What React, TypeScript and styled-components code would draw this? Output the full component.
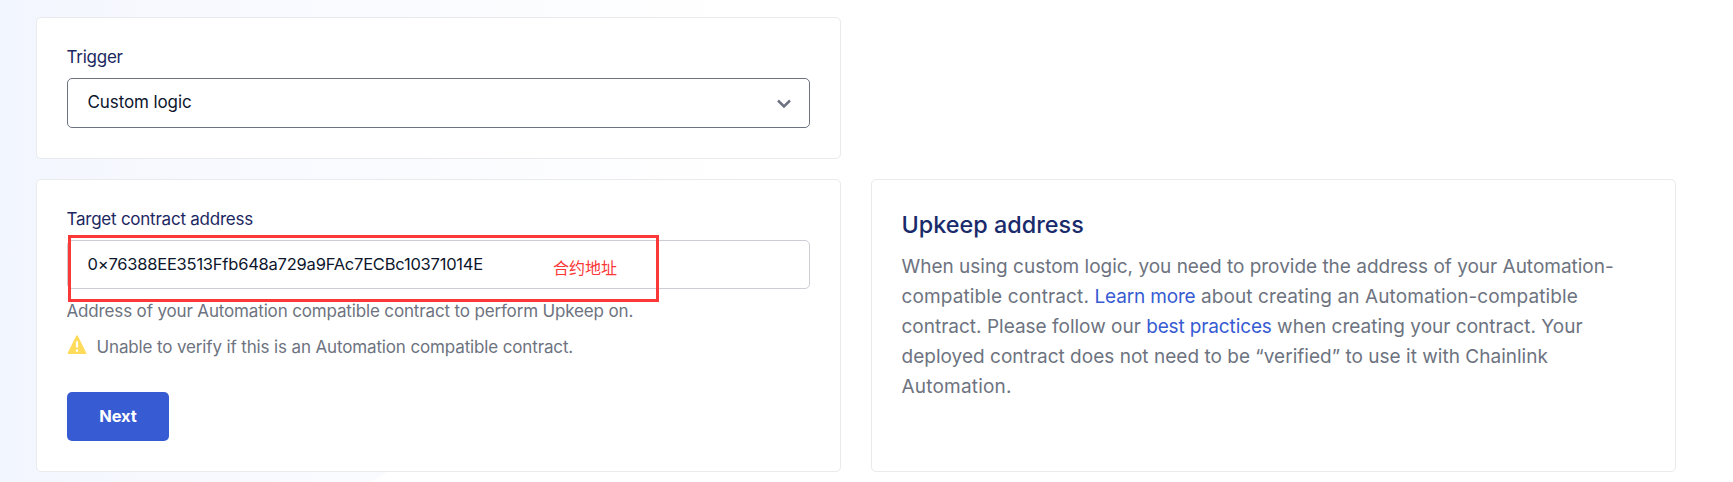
import React from "react";
import styled, { createGlobalStyle } from "styled-components";

const GlobalStyle = createGlobalStyle`
  * { box-sizing: border-box; }
  html, body { margin: 0; background: #ffffff; overflow: hidden; }
  body { font-family: Inter, "Noto Sans CJK SC", sans-serif; color: #6d7380; }
`;

const Page = styled.main`
  position: relative;
  width: 1733px;
  height: 482px;
  padding: 17px 57px 10px 36px;
  overflow: hidden;
`;

const Backdrop = styled.div`
  position: absolute;
  inset: 0;
  background: linear-gradient(90deg, #f2f6ff 0, #f8f9fe 180px, #fafbff 400px, #ffffff 740px);
  clip-path: polygon(0 0, 100% 0, 100% 472px, 387px 472px, 371px 482px, 0 482px);
`;

const Grid = styled.div`
  position: relative;
  display: grid;
  grid-template-columns: 805px 805px;
  grid-template-rows: 142px 293px;
  column-gap: 30px;
  row-gap: 20px;
`;

const Card = styled.section<{ $column: number }>`
  grid-column: ${(p) => p.$column};
  display: flex;
  flex-direction: column;
  align-items: flex-start;
  padding: 27px 30px 0;
  background: #ffffff;
  border: 1px solid #e9eaec;
  border-radius: 5px;
`;

const InfoCard = styled(Card)`
  padding: 30px 29.5px 0;
`;

const Text = styled.span<{ $spacing?: number }>`
  white-space: pre;
  letter-spacing: ${(p) => p.$spacing ?? 0}px;
`;

const Label = styled.label`
  font-size: 17px;
  line-height: 24px;
  color: #1c2762;
  margin: 0 0 9px -0.5px;
`;

const Select = styled.div`
  display: flex;
  align-items: center;
  justify-content: space-between;
  width: 743px;
  height: 50px;
  padding: 0 18px 2px 19.5px;
  border: 1px solid #6d7380;
  border-radius: 5px;
  font-size: 17px;
  line-height: 24px;
  color: #0c162c;
`;

const Chevron = styled.svg`
  width: 14px;
  height: 10px;
  margin-top: 4px;
`;

const Field = styled.div`
  position: relative;
  display: flex;
  align-items: center;
  width: 743px;
  height: 49px;
  padding: 0 20px 1px 19.5px;
  border: 1px solid #cdced3;
  border-radius: 5px;
  font-size: 16.5px;
  line-height: 24px;
  color: #0c162c;
`;

const Annotation = styled.div`
  position: absolute;
  left: 0;
  top: -6px;
  width: 591px;
  height: 67px;
  padding: 17px 0 0 482px;
  border: 3px solid #fa3838;
  color: #fa3838;
  font: 400 16px/24px "Noto Sans CJK SC", sans-serif;
`;

const Helper = styled.p`
  margin: 10px 0 0 -0.5px;
  font-size: 17px;
  line-height: 24px;
`;

const Warning = styled.div`
  display: flex;
  gap: 9.5px;
  margin-top: 12px;
  font-size: 17px;
  line-height: 24px;
`;

const NextButton = styled.button`
  width: 102px;
  height: 49px;
  margin-top: 33px;
  padding: 0 0 1px;
  border: 0;
  border-radius: 5px;
  background: #375bd2;
  color: #ffffff;
  font: 700 16.5px/24px Inter, sans-serif;
`;

const Heading = styled.h2`
  margin: 0 0 12px;
  font-size: 23.4px;
  font-weight: 500;
  line-height: 30px;
  color: #1a2b6b;
`;

const Body = styled.p`
  margin: 0;
  font-size: 19px;
  line-height: 30px;
`;

const Line = styled.span`
  display: block;
  white-space: pre;
`;

const Link = styled.a<{ $spacing: number }>`
  color: #375bd2;
  letter-spacing: ${(p) => p.$spacing}px;
`;

export default function App() {
  return (
    <Page>
      <GlobalStyle />
      <Backdrop />
      <Grid>
        <Card $column={1}>
          <Label><Text $spacing={-0.24}>Trigger</Text></Label>
          <Select>
            <Text $spacing={-0.1}>Custom logic</Text>
            <Chevron viewBox="0 0 14 10" fill="none" stroke="#6d7380" strokeWidth="2.5">
              <path d="M1 1.5 7 7.5 13 1.5" />
            </Chevron>
          </Select>
        </Card>

        <Card $column={1}>
          <Label><Text $spacing={-0.24}>Target contract address</Text></Label>
          <Field>
            <Text $spacing={-0.22}>0×76388EE3513Ffb648a729a9FAc7ECBc10371014E</Text>
            <Annotation>合约地址</Annotation>
          </Field>
          <Helper>
            <Text $spacing={-0.15}>Address of your Automation compatible contract to perform Upkeep on.</Text>
          </Helper>
          <Warning>
            <svg width="20" height="20" viewBox="0 0 20 20">
              <path d="M10 1.2 18.4 18.2H1.6Z" fill="#ffdb5c" stroke="#ffdb5c" strokeWidth="1.8" strokeLinejoin="round" />
              <path d="M10 6.2v6.2M10 14.4v2.4" stroke="#ffffff" strokeWidth="2.2" />
            </svg>
            <Text $spacing={-0.14}>Unable to verify if this is an Automation compatible contract.</Text>
          </Warning>
          <NextButton><Text $spacing={-0.1}>Next</Text></NextButton>
        </Card>

        <InfoCard $column={2}>
          <Heading>Upkeep address</Heading>
          <Body>
            <Line>
              <Text $spacing={-0.01}>When using custom logic, you need to provide the address of your Automation-</Text>
            </Line>
            <Line>
              <Text $spacing={0.13}>{"compatible contract. "}</Text>
              <Link $spacing={-0.16}>Learn more</Link>
              <Text $spacing={0.095}>{" about creating an Automation-compatible"}</Text>
            </Line>
            <Line>
              <Text>{"contract. Please follow our "}</Text>
              <Link $spacing={-0.13}>best practices</Link>
              <Text $spacing={0.01}>{" when creating your contract. Your"}</Text>
            </Line>
            <Line>
              <Text $spacing={0.02}>deployed contract does not need to be “verified” to use it with Chainlink</Text>
            </Line>
            <Line>
              <Text $spacing={0.2}>Automation.</Text>
            </Line>
          </Body>
        </InfoCard>
      </Grid>
    </Page>
  );
}
